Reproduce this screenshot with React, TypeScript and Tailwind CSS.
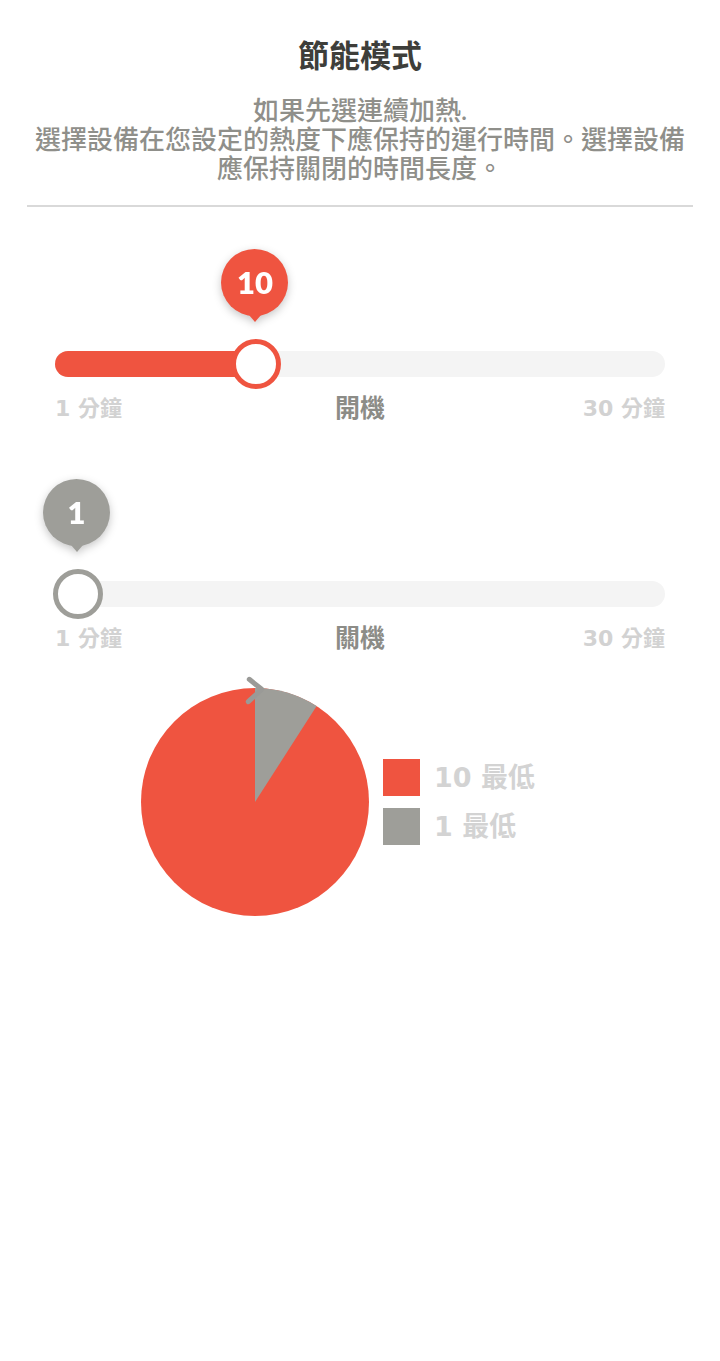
const RED = "#ef5440"
const GRAY = "#9e9e99"
const NUM_FONT = '"DejaVu Sans", "Noto Sans CJK TC", sans-serif'

type SliderProps = {
  value: number
  min: number
  max: number
  color: string
  label: string
  fill?: boolean
}

// track runs 611px; the thumb centre travels between 23px and 598px
function EnergySlider({ value, min, max, color, label, fill }: SliderProps) {
  const pos = 23 + ((value - min) / (max - min)) * 575

  return (
    <div className="mx-[55px]">
      <div className="relative h-[128px]">
        {/* value bubble */}
        <div
          className="absolute top-0 flex flex-col items-center drop-shadow-[0_3px_4px_rgba(0,0,0,0.22)]"
          style={{ left: pos - 35 }}
        >
          <div
            className="flex h-[67px] w-[67px] items-center justify-center rounded-full text-[31px] font-extrabold text-white"
            style={{ backgroundColor: color }}
          >
            {value}
          </div>
          <div
            className="-mt-[1px] h-0 w-0 border-x-[6px] border-t-[7px] border-x-transparent"
            style={{ borderTopColor: color }}
          />
        </div>

        {/* track */}
        <div className="absolute bottom-0 left-0 right-0 h-[26px] rounded-full bg-[#f4f4f4]">
          {fill && (
            <div
              className="h-full rounded-l-full"
              style={{ width: pos, backgroundColor: color }}
            />
          )}
        </div>

        {/* thumb */}
        <div
          className="absolute bottom-[-12px] h-[50px] w-[50px] rounded-full border-[5px] bg-white"
          style={{ left: pos - 25, borderColor: color }}
        />
      </div>

      <div
        className="mt-[18px] grid grid-cols-3 items-center text-[22px] font-bold leading-[28px]"
        style={{ fontFamily: NUM_FONT }}
      >
        <span className="text-left text-[#d2d2d2]">{min} 分鐘</span>
        <span className="text-center text-[25px] font-bold text-[#8c8c87]">{label}</span>
        <span className="text-right text-[#d2d2d2]">{max} 分鐘</span>
      </div>
    </div>
  )
}

function Pie({ on, off }: { on: number; off: number }) {
  const angle = (off / (on + off)) * Math.PI * 2
  const cx = 120
  const cy = 120
  const r = 114
  const ex = cx + r * Math.sin(angle)
  const ey = cy - r * Math.cos(angle)
  const large = angle > Math.PI ? 1 : 0

  return (
    <svg width="240" height="240" viewBox="0 0 240 240" className="overflow-visible">
      <circle cx={cx} cy={cy} r={r} fill={RED} />
      <path d={`M${cx} ${cy} L${cx} ${cy - r} A${r} ${r} 0 ${large} 1 ${ex} ${ey} Z`} fill={GRAY} />
      {/* start marker */}
      <polyline
        points="114.3,-2.7 126.7,7.3 113.3,19.7"
        fill="none"
        stroke="#9a9a97"
        strokeWidth="5"
        strokeLinecap="round"
        strokeLinejoin="round"
      />
    </svg>
  )
}

function App() {
  const onMinutes = 10
  const offMinutes = 1

  return (
    <div
      className="min-h-screen w-full bg-white"
      style={{ fontFamily: '"Lato", "Noto Sans CJK TC", sans-serif' }}
    >
      <h1 className="pt-[35px] text-center text-[31px] font-bold leading-[40px] text-[#3e3e3a]">
        節能模式
      </h1>
      <p className="mt-[21px] text-center text-[26px] font-medium leading-[29px] text-[#8f8f8a]">
        如果先選連續加熱.
        <br />
        選擇設備在您設定的熱度下應保持的運行時間。選擇設備
        <br />
        應保持關閉的時間長度。
      </p>

      <div className="mx-[27px] mt-[22px] h-[2px] bg-[#d9d9d9]" />

      <div className="mt-[42px]">
        <EnergySlider value={onMinutes} min={1} max={30} color={RED} label="開機" fill />
      </div>

      <div className="mt-[56px]">
        <EnergySlider value={offMinutes} min={1} max={30} color={GRAY} label="關機" />
      </div>

      <div className="mt-[29px] flex items-center pl-[135px]">
        <Pie on={onMinutes} off={offMinutes} />
        <div className="ml-[8px] flex flex-col gap-[12px]" style={{ fontFamily: NUM_FONT }}>
          <div className="flex items-center gap-[14px]">
            <div className="h-[37px] w-[37px]" style={{ backgroundColor: RED }} />
            <span className="text-[27px] font-bold leading-[37px] text-[#d3d3d3]">{onMinutes} 最低</span>
          </div>
          <div className="flex items-center gap-[14px]">
            <div className="h-[37px] w-[37px]" style={{ backgroundColor: GRAY }} />
            <span className="text-[27px] font-bold leading-[37px] text-[#d3d3d3]">{offMinutes} 最低</span>
          </div>
        </div>
      </div>
    </div>
  )
}

export default App
